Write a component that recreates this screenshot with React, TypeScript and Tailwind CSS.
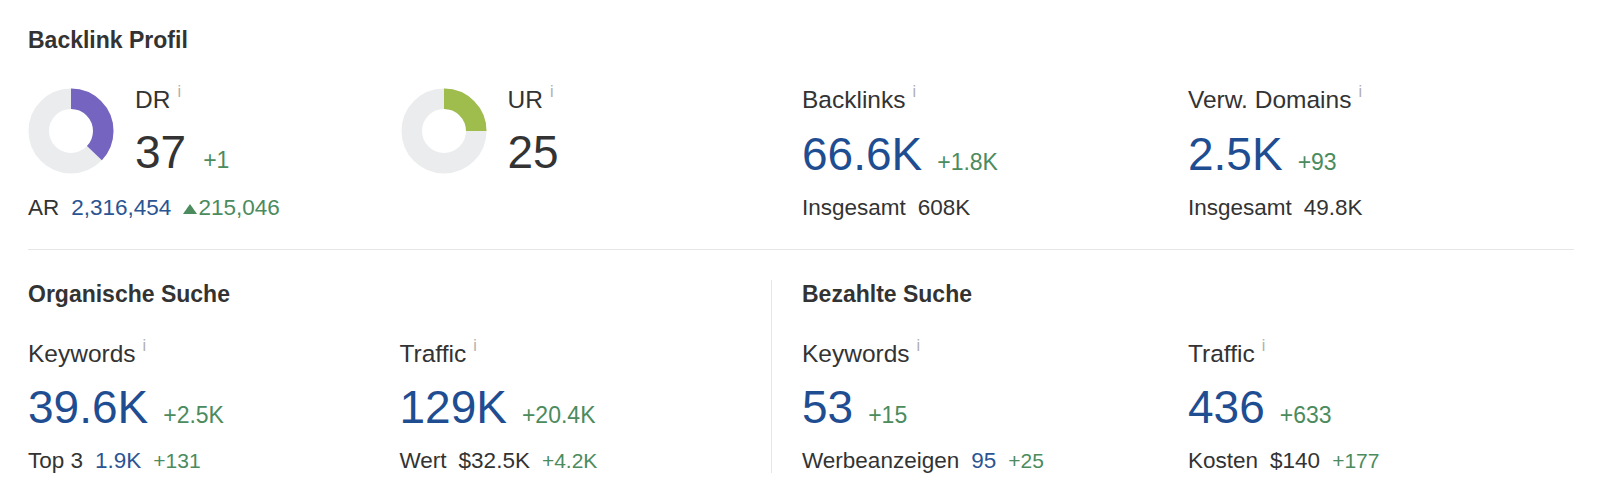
import React from "react";

const Info = () => (
  <span className="relative -top-[4px] ml-[7px] text-[16px] leading-[16px] text-[#b0b0b0]">i</span>
);

const Label = ({ text }: { text: string }) => (
  <div className="flex h-[24px] items-start">
    <span className="text-[24.5px] leading-[24px] text-[#333333]">{text}</span>
    <Info />
  </div>
);

const Donut = ({ pct, color }: { pct: number; color: string }) => {
  const r = 32.25;
  const c = 2 * Math.PI * r;
  return (
    <svg width="86" height="86" viewBox="0 0 86 86" className="shrink-0">
      <circle cx="43" cy="43" r={r} fill="none" stroke="#ebeced" strokeWidth="20.5" />
      <circle
        cx="43"
        cy="43"
        r={r}
        fill="none"
        stroke={color}
        strokeWidth="20.5"
        strokeDasharray={`${c * pct} ${c}`}
        transform="rotate(-90 43 43)"
      />
    </svg>
  );
};

const BigRow = ({ value, delta, mt = "mt-[19px]" }: { value: string; delta?: string; mt?: string }) => (
  <div className={`${mt} flex items-baseline gap-[15px]`}>
    <span className="text-[46px] leading-[46px] text-[#1f4d92]">{value}</span>
    {delta && <span className="text-[23px] leading-none text-[#4b8b5d]">{delta}</span>}
  </div>
);

const Stat = ({
  label,
  value,
  delta,
  sub,
  topGap = "mt-[19px]",
}: {
  label: string;
  value: string;
  delta: string;
  sub: React.ReactNode;
  topGap?: string;
}) => (
  <div className="flex flex-col">
    <Label text={label} />
    <BigRow value={value} delta={delta} mt={topGap} />
    <div className="mt-[20px] flex h-[22px] items-baseline gap-3 text-[22.5px] leading-[22px] text-[#333333]">{sub}</div>
  </div>
);

const Green = ({ children }: { children: React.ReactNode }) => (
  <span className="text-[21px] text-[#4b8b5d]">{children}</span>
);
const Blue = ({ children }: { children: React.ReactNode }) => <span className="text-[#2b5492]">{children}</span>;

export default function App() {
  return (
    <div className="h-[500px] w-[1600px] bg-white pl-[28px] pr-[26px] pt-[29px] font-['Liberation_Sans',Arial,sans-serif] text-[#333333]">
      <h2 className="text-[23px] font-bold leading-[23px] text-[#333333]">Backlink Profil</h2>

      {/* Top row */}
      <div className="mt-[36px] grid grid-cols-[743px_1fr]">
        <div className="grid grid-cols-2">
          <div className="flex flex-col">
            <div className="flex gap-[21px]">
              <Donut pct={0.37} color="#7564c0" />
              <div className="flex flex-col">
                <Label text="DR" />
                <div className="mt-[17px] flex items-baseline gap-[17px]">
                  <span className="text-[46px] leading-[46px] text-[#333333]">37</span>
                  <span className="text-[23px] leading-none text-[#4b8b5d]">+1</span>
                </div>
              </div>
            </div>
            <div className="mt-[22px] flex h-[22px] items-baseline gap-3 text-[22.5px] leading-[22px]">
              <span>AR</span>
              <Blue>2,316,454</Blue>
              <span className="flex items-baseline gap-[1px] text-[#4b8b5d]">
                <svg width="14" height="10" viewBox="0 0 14 10" className="relative top-[1px] self-center">
                  <polygon points="7,0 14,10 0,10" fill="#4b8b5d" />
                </svg>
                <span>215,046</span>
              </span>
            </div>
          </div>
          <div className="flex gap-[21px] pl-[1px]">
            <Donut pct={0.25} color="#9ebd4c" />
            <div className="flex flex-col">
              <Label text="UR" />
              <div className="mt-[17px] flex items-baseline">
                <span className="text-[46px] leading-[46px] text-[#333333]">25</span>
              </div>
            </div>
          </div>
        </div>
        <div className="grid grid-cols-2 border-l border-transparent pl-[30px]">
          <Stat
            label="Backlinks"
            value="66.6K"
            delta="+1.8K"
            sub={
              <>
                <span>Insgesamt</span>
                <span>608K</span>
              </>
            }
          />
          <Stat
            label="Verw. Domains"
            value="2.5K"
            delta="+93"
            sub={
              <>
                <span>Insgesamt</span>
                <span>49.8K</span>
              </>
            }
          />
        </div>
      </div>

      <div className="mt-[30px] h-px w-full bg-[#e6e6e6]" />

      {/* Bottom section */}
      <div className="mt-[30px] grid grid-cols-[743px_1fr]">
        <div className="flex flex-col pb-[1px]">
          <h3 className="text-[23px] font-bold leading-[28px]">Organische Suche</h3>
          <div className="mt-[34px] grid grid-cols-2">
            <Stat
              label="Keywords"
              value="39.6K"
              delta="+2.5K"
              topGap="mt-[18px]"
              sub={
                <>
                  <span>Top 3</span>
                  <Blue>1.9K</Blue>
                  <Green>+131</Green>
                </>
              }
            />
            <Stat
              label="Traffic"
              value="129K"
              delta="+20.4K"
              topGap="mt-[18px]"
              sub={
                <>
                  <span>Wert</span>
                  <span>$32.5K</span>
                  <Green>+4.2K</Green>
                </>
              }
            />
          </div>
        </div>
        <div className="flex flex-col border-l border-[#e6e6e6] pb-[1px] pl-[30px]">
          <h3 className="text-[23px] font-bold leading-[28px]">Bezahlte Suche</h3>
          <div className="mt-[34px] grid grid-cols-2">
            <Stat
              label="Keywords"
              value="53"
              delta="+15"
              topGap="mt-[18px]"
              sub={
                <>
                  <span>Werbeanzeigen</span>
                  <Blue>95</Blue>
                  <Green>+25</Green>
                </>
              }
            />
            <Stat
              label="Traffic"
              value="436"
              delta="+633"
              topGap="mt-[18px]"
              sub={
                <>
                  <span>Kosten</span>
                  <span>$140</span>
                  <Green>+177</Green>
                </>
              }
            />
          </div>
        </div>
      </div>
    </div>
  );
}
